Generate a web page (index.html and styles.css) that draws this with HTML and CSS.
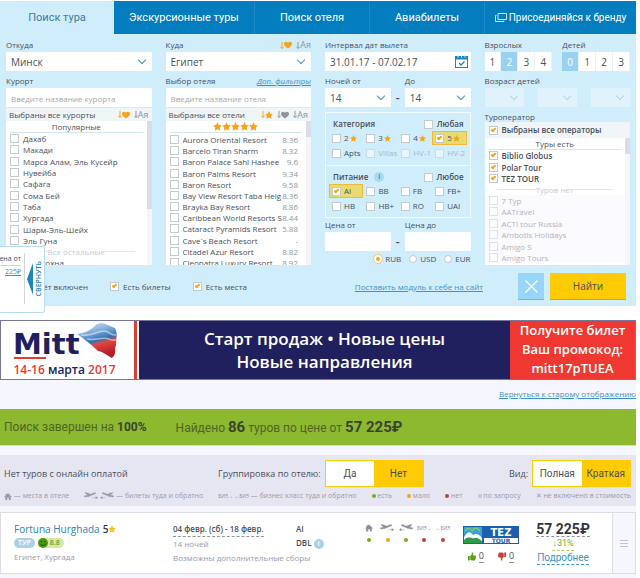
FILE: index.html
```
<!DOCTYPE html>
<html lang="ru">
<head>
    <meta charset="UTF-8">
    <meta name="viewport" content="width=device-width, initial-scale=1.0">
    <title>Поиск тура</title>
    <link rel="stylesheet" href="styles.css">
</head>
<body>
    <svg class="sprite" aria-hidden="true">
        <symbol id="i-arrow" viewBox="0 0 5 10"><path d="M2.5 0.500V8M0.500 6.500L2.500 9L4.500 6.500" fill="none" stroke="currentColor" stroke-width="1.200"/></symbol>
        <symbol id="i-heart" viewBox="0 0 10 9"><path d="M5 8.800C1 5.800 0 4.500 0 2.800C0 .3 3.500-.8 5 1.700C6.500-.8 10 .3 10 2.800C10 4.500 9 5.800 5 8.800Z" fill="currentColor"/></symbol>
        <symbol id="i-star" viewBox="0 0 10 10"><path d="M5 0L6.500 3.300L10 3.800L7.400 6.200L8.100 9.800L5 8L1.900 9.800L2.600 6.200L0 3.800L3.500 3.300Z" fill="currentColor"/></symbol>
        <symbol id="i-home" viewBox="0 0 10 9"><path d="M5 0L10 5H8.500V9H6V6H4V9H1.500V5H0L2 3V1H3.200V1.800Z" fill="currentColor"/></symbol>
        <symbol id="i-plane-to" viewBox="0 0 16 8"><path d="M1 0.500H3L7 2L11 .6C12 .3 13 .8 12.500 1.400L5 4.600L1 5L0 4L4 3.200ZM9 5.800H14M12.500 4.300L14.500 5.800L12.500 7.300" fill="currentColor" stroke="currentColor" stroke-width=".5"/></symbol>
        <symbol id="i-plane-back" viewBox="0 0 16 8"><path d="M15 0.500H13L9 2L5 .6C4 .3 3 .8 3.500 1.400L11 4.600L15 5L16 4L12 3.200ZM7 5.800H2M3.500 4.300L1.500 5.800L3.500 7.300" fill="currentColor" stroke="currentColor" stroke-width=".5"/></symbol>
        <symbol id="i-thumb" viewBox="0 0 9 9"><path d="M0 4H2V9H0ZM2.500 4L4.200 2.300V0H5.500L6 1.500L5.600 3.300H8.500L9 5L8.200 8.500L7.500 9H4L2.500 8Z" fill="currentColor"/></symbol>
    </svg>

    <nav class="tabs">
        <a href="#" class="tab active">Поиск тура</a>
        <a href="#" class="tab">Экскурсионные туры</a>
        <a href="#" class="tab">Поиск отеля</a>
        <a href="#" class="tab">Авиабилеты</a>
        <a href="#" class="tab tab-brand">
            <svg width="12" height="9" viewBox="0 0 12 9"><path d="M3 .5H11.500V6.500H3ZM1.500 2.500H.5V8.500H9V7.500" fill="none" stroke="currentColor" stroke-width=".8"/></svg>
            Присоединяйся к бренду
        </a>
    </nav>

    <form class="search">
        <div class="columns">
            <div class="column">
                <div class="label-row"><label for="from">Откуда</label></div>
                <div class="select"><select id="from"><option>Минск</option></select></div>
                <div class="label-row"><label for="resort">Курорт</label></div>
                <input type="text" id="resort" class="field" placeholder="Введите название курорта">
                <div class="list">
                    <div class="list-head">
                        <span>Выбраны все курорты</span>
                        <span class="sort">
                            <span class="orange"><svg width="4" height="9"><use href="#i-arrow"/></svg><svg width="8" height="8"><use href="#i-heart"/></svg></span>
                            <span class="gray"><svg width="4" height="9"><use href="#i-arrow"/></svg>Aя</span>
                        </span>
                    </div>
                    <div class="scroll">
                        <div class="scroll-body">
                            <div class="group-title">Популярные</div>
                            <ul class="items resorts">
                                <li><label><input type="checkbox">Дахаб</label></li>
                                <li><label><input type="checkbox">Макади</label></li>
                                <li><label><input type="checkbox">Марса Алам, Эль Кусейр</label></li>
                                <li><label><input type="checkbox">Нувейба</label></li>
                                <li><label><input type="checkbox">Сафага</label></li>
                                <li><label><input type="checkbox">Сома Бей</label></li>
                                <li><label><input type="checkbox">Таба</label></li>
                                <li><label><input type="checkbox">Хургада</label></li>
                                <li><label><input type="checkbox">Шарм-Эль-Шейх</label></li>
                                <li><label><input type="checkbox">Эль Гуна</label></li>
                            </ul>
                            <div class="separator">Все остальные</div>
                            <ul class="items"><li><label><input type="checkbox">Айн Сохна</label></li></ul>
                        </div>
                        <div class="track"><div class="thumb thumb-long"></div></div>
                    </div>
                </div>
            </div>

            <div class="column">
                <div class="label-row">
                    <label for="to">Куда</label>
                    <span class="sort">
                        <span class="orange"><svg width="4" height="9"><use href="#i-arrow"/></svg><svg width="8" height="8"><use href="#i-heart"/></svg></span>
                        <span class="gray"><svg width="4" height="9"><use href="#i-arrow"/></svg>Aя</span>
                    </span>
                </div>
                <div class="select"><select id="to"><option>Египет</option></select></div>
                <div class="label-row"><label for="hotel">Выбор отеля</label><a href="#" class="filters">Доп. фильтры</a></div>
                <input type="text" id="hotel" class="field" placeholder="Введите название отеля">
                <div class="list">
                    <div class="list-head">
                        <span>Выбраны все отели</span>
                        <span class="sort">
                            <span class="orange"><svg width="4" height="9"><use href="#i-arrow"/></svg><svg width="8" height="8"><use href="#i-star"/></svg></span>
                            <span class="gray"><svg width="4" height="9"><use href="#i-arrow"/></svg><svg width="8" height="8"><use href="#i-heart"/></svg></span>
                            <span class="gray"><svg width="4" height="9"><use href="#i-arrow"/></svg>Aя</span>
                        </span>
                    </div>
                    <div class="scroll">
                        <div class="scroll-body">
                            <div class="group-title orange">
                                <svg width="9" height="9"><use href="#i-star"/></svg><svg width="9" height="9"><use href="#i-star"/></svg><svg width="9" height="9"><use href="#i-star"/></svg><svg width="9" height="9"><use href="#i-star"/></svg><svg width="9" height="9"><use href="#i-star"/></svg>
                            </div>
                            <ul class="items hotels">
                                <li><label><input type="checkbox"><span>Aurora Oriental Resort</span></label><b>8.36</b></li>
                                <li><label><input type="checkbox"><span>Barcelo Tiran Sharm</span></label><b>8.32</b></li>
                                <li><label><input type="checkbox"><span>Baron Palace Sahl Hashee</span></label><b>9.6</b></li>
                                <li><label><input type="checkbox"><span>Baron Palms Resort</span></label><b>9.34</b></li>
                                <li><label><input type="checkbox"><span>Baron Resort</span></label><b>9.58</b></li>
                                <li><label><input type="checkbox"><span>Bay View Resort Taba Heig</span></label><b>8.36</b></li>
                                <li><label><input type="checkbox"><span>Brayka Bay Resort</span></label><b>8.86</b></li>
                                <li><label><input type="checkbox"><span>Caribbean World Resorts S</span></label><b>8.44</b></li>
                                <li><label><input type="checkbox"><span>Cataract Pyramids Resort</span></label><b>5.88</b></li>
                                <li><label><input type="checkbox"><span>Cave`s Beach Resort</span></label><b>-</b></li>
                                <li><label><input type="checkbox"><span>Citadel Azur Resort</span></label><b>8.82</b></li>
                                <li><label><input type="checkbox"><span>Cleopatra Luxury Resort</span></label><b>8.92</b></li>
                            </ul>
                        </div>
                        <div class="track"><div class="thumb"></div></div>
                    </div>
                </div>
            </div>

            <div class="column">
                <div class="label-row"><label for="dates">Интервал дат вылета</label></div>
                <div class="date">
                    <input type="text" id="dates" class="field" value="31.01.17 - 07.02.17">
                    <svg width="13" height="13" viewBox="0 0 13 13"><rect x=".5" y="1.500" width="12" height="11" fill="#fff" stroke="#1b86be"/><path d="M0 1H13V4.500H0Z" fill="#1b86be"/><path d="M3 0V2.500M6.500 0V2.500M10 0V2.500" stroke="#d0edfc"/><path d="M4 8L6 10L9.500 6.500" fill="none" stroke="#1b86be" stroke-width="1.300"/></svg>
                </div>
                <div class="range">
                    <div>
                        <div class="label-row"><label for="nights-from">Ночей от</label></div>
                        <div class="select"><select id="nights-from"><option>14</option></select></div>
                    </div>
                    <span class="dash">-</span>
                    <div>
                        <div class="label-row"><label for="nights-to">До</label></div>
                        <div class="select"><select id="nights-to"><option>14</option></select></div>
                    </div>
                </div>
                <div class="options">
                    <div class="options-group">
                        <div class="options-head"><span>Категория</span><label><input type="checkbox">Любая</label></div>
                        <div class="options-grid">
                            <label><input type="checkbox">2<svg width="7" height="7"><use href="#i-star"/></svg></label>
                            <label><input type="checkbox">3<svg width="7" height="7"><use href="#i-star"/></svg></label>
                            <label><input type="checkbox">4<svg width="7" height="7"><use href="#i-star"/></svg></label>
                            <label class="picked"><input type="checkbox" checked>5<svg width="7" height="7"><use href="#i-star"/></svg></label>
                            <label><input type="checkbox">Apts</label>
                            <label class="off"><input type="checkbox" disabled>Villas</label>
                            <label class="off"><input type="checkbox" disabled>HV-1</label>
                            <label class="off"><input type="checkbox" disabled>HV-2</label>
                        </div>
                    </div>
                    <div class="options-group">
                        <div class="options-head"><span>Питание</span><i class="info">i</i><label><input type="checkbox">Любое</label></div>
                        <div class="options-grid">
                            <label class="picked"><input type="checkbox" checked>AI</label>
                            <label><input type="checkbox">BB</label>
                            <label><input type="checkbox">FB</label>
                            <label><input type="checkbox">FB+</label>
                            <label><input type="checkbox">HB</label>
                            <label><input type="checkbox">HB+</label>
                            <label><input type="checkbox">RO</label>
                            <label><input type="checkbox">UAI</label>
                        </div>
                    </div>
                </div>
                <div class="range">
                    <div>
                        <div class="label-row"><label for="price-from">Цена от</label></div>
                        <input type="text" id="price-from" class="field">
                    </div>
                    <span class="dash">-</span>
                    <div>
                        <div class="label-row"><label for="price-to">Цена до</label></div>
                        <input type="text" id="price-to" class="field">
                    </div>
                </div>
                <div class="currency">
                    <label><input type="radio" name="currency" checked>RUB</label>
                    <label><input type="radio" name="currency">USD</label>
                    <label><input type="radio" name="currency">EUR</label>
                </div>
            </div>

            <div class="column">
                <div class="people">
                    <div>
                        <div class="label-row"><span>Взрослых</span></div>
                        <div class="numbers">
                            <button type="button">1</button><button type="button" class="on">2</button><button type="button">3</button><button type="button">4</button>
                        </div>
                    </div>
                    <div>
                        <div class="label-row"><span>Детей</span></div>
                        <div class="numbers">
                            <button type="button" class="on">0</button><button type="button">1</button><button type="button">2</button><button type="button">3</button>
                        </div>
                    </div>
                </div>
                <div class="label-row"><span>Возраст детей</span></div>
                <div class="ages">
                    <div class="select"><select disabled aria-label="Возраст 1"></select></div>
                    <div class="select"><select disabled aria-label="Возраст 2"></select></div>
                    <div class="select"><select disabled aria-label="Возраст 3"></select></div>
                </div>
                <div class="label-row"><span>Туроператор</span></div>
                <div class="list operators">
                    <div class="list-head"><label><input type="checkbox" checked>Выбраны все операторы</label></div>
                    <div class="scroll">
                        <div class="scroll-body">
                            <div class="group-title">Туры есть</div>
                            <ul class="items strong">
                                <li><label><input type="checkbox" checked>Biblio Globus</label></li>
                                <li><label><input type="checkbox" checked>Polar Tour</label></li>
                                <li><label><input type="checkbox" checked>TEZ TOUR</label></li>
                            </ul>
                            <div class="separator">Туров нет</div>
                            <ul class="items empty">
                                <li><label><input type="checkbox">7 Тур</label></li>
                                <li><label><input type="checkbox">AATravel</label></li>
                                <li><label><input type="checkbox">ACTI tour Russia</label></li>
                                <li><label><input type="checkbox">Ambotis Holidays</label></li>
                                <li><label><input type="checkbox">Amigo S</label></li>
                                <li><label><input type="checkbox">Amigo Tours</label></li>
                            </ul>
                        </div>
                        <div class="track"><div class="thumb"></div></div>
                    </div>
                </div>
            </div>
        </div>

        <div class="actions">
            <label><input type="checkbox" checked>Перелёт включен</label>
            <label><input type="checkbox" checked>Есть билеты</label>
            <label><input type="checkbox" checked>Есть места</label>
            <a href="#">Поставить модуль к себе на сайт</a>
            <button type="reset" class="clear" aria-label="Очистить"><svg width="13" height="13" viewBox="0 0 13 13"><path d="M.5 .5L12.500 12.500M12.500 .5L.5 12.500" stroke="#fff" stroke-width="1.300"/></svg></button>
            <button type="submit" class="find">Найти</button>
        </div>
    </form>

    <aside class="collapsed">
        <div class="collapsed-price"><span>ена от</span><a href="#">225₽</a></div>
        <button type="button"><svg width="6" height="32" viewBox="0 0 6 32"><path d="M6 0V32L0 16Z" fill="#1b86be"/></svg><span>СВЕРНУТЬ</span></button>
    </aside>

    <a href="#" class="banner">
        <span class="mitt">
            <svg width="122" height="42" viewBox="0 0 122 42">
                <defs>
                    <linearGradient id="flag" x1="0" y1="0" x2="0.300" y2="1">
                        <stop offset="0" stop-color="#dfe9f5"/><stop offset=".3" stop-color="#8fb6dd"/><stop offset=".6" stop-color="#2f6fb5"/><stop offset=".68" stop-color="#e04a45"/><stop offset="1" stop-color="#b51f2a"/>
                    </linearGradient>
                </defs>
                <path d="M76 13C84 12 90 9 96 3C102 0 106 4 114 7C117 12 115 18 115 24C113 29 116 33 111 37C107 35 103 31 97 30C93 26 86 20 76 13Z" fill="url(#flag)"/>
                <path d="M80 14C90 16 96 10 103 10C108 10 111 15 115 14M86 18C96 20 102 15 108 18C111 20 113 19 115 19" fill="none" stroke="#fff" stroke-opacity=".5" stroke-width="1.500"/>
                <text x="12" y="33" class="mitt-name">Mitt</text>
                <rect x="13" y="36" width="32" height="2" fill="#e8392f"/>
            </svg>
            <span class="mitt-date">14-16 <b>марта</b> 2017</span>
        </span>
        <span class="banner-text">Старт продаж • Новые цены<br>Новые направления</span>
        <span class="promo">Получите билет<br>Ваш промокод:<br>mitt17pTUEA</span>
    </a>

    <main class="results">
        <div class="old-view"><a href="#">Вернуться к старому отображению</a></div>
        <div class="status">
            <span>Поиск завершен на <b>100%</b></span>
            <span>Найдено <b class="big">86</b> туров по цене от <b class="big">57 225₽</b></span>
        </div>
        <div class="toolbar">
            <div class="toolbar-row">
                <span class="no-tours">Нет туров с онлайн оплатой</span>
                <span>Группировка по отелю:</span>
                <div class="toggle"><button type="button">Да</button><button type="button" class="on">Нет</button></div>
                <span class="view">Вид:</span>
                <div class="toggle"><button type="button">Полная</button><button type="button" class="on">Краткая</button></div>
            </div>
            <div class="legend">
                <span><svg width="8" height="7"><use href="#i-home"/></svg> — места в отеле</span>
                <span><svg width="15" height="8"><use href="#i-plane-to"/></svg><svg width="15" height="8"><use href="#i-plane-back"/></svg> — билеты туда и обратно</span>
                <span><small>БИЗ→ ←БИЗ</small> — бизнес класс туда и обратно</span>
                <span><i class="dot green"></i> есть</span>
                <span><i class="dot amber"></i> мало</span>
                <span><i class="dot red"></i> нет</span>
                <span><i class="dot"></i> по запросу</span>
                <span>✕ не включено в стоимость</span>
            </div>
        </div>

        <article class="tour">
            <div class="tour-hotel">
                <h2><a href="#">Fortuna Hurghada</a> 5<svg width="8" height="8"><use href="#i-star"/></svg></h2>
                <div class="badges">
                    <span class="type">ТУР</span>
                    <span class="score"><svg width="10" height="10" viewBox="0 0 10 10"><circle cx="5" cy="5" r="5" fill="#4c9a0b"/><circle cx="3.300" cy="3.500" r=".8" fill="#1d4a00"/><circle cx="6.700" cy="3.500" r=".8" fill="#1d4a00"/><path d="M2 5.500Q5 9.500 8 5.500" fill="none" stroke="#1d4a00"/></svg>8.8</span>
                </div>
                <div class="place">Египет, Хургада</div>
            </div>
            <div class="tour-dates">
                <strong>04 февр. (сб) - 18 февр.</strong>
                <span>14 ночей</span>
                <span>Возможны дополнительные сборы</span>
            </div>
            <div class="tour-room"><span>AI</span><span>DBL <i class="info">i</i></span></div>
            <div class="tour-seats">
                <span><svg width="8" height="8"><use href="#i-home"/></svg><i class="dot green"></i></span>
                <span><svg width="15" height="8"><use href="#i-plane-to"/></svg><i class="dot amber"></i></span>
                <span><svg width="15" height="8"><use href="#i-plane-back"/></svg><i class="dot green"></i></span>
                <span><small>БИЗ→</small><i class="dot red"></i></span>
                <span><small>←БИЗ</small><i class="dot red"></i></span>
            </div>
            <div class="tour-operator">
                <svg width="56" height="18" viewBox="0 0 56 18">
                    <rect width="56" height="18" fill="#1d5fae"/>
                    <rect x="1" y="1" width="18" height="16" fill="#3aa0dc"/>
                    <path d="M1 11C5 5 7 5 10 9C13 7 16 8 19 12V17H1Z" fill="#fff"/>
                    <path d="M1 14C6 9 8 13 12 12C15 11 17 14 19 15V17H1Z" fill="#2f9a4a"/>
                    <path d="M2 5C5 1 8 2 9 5M9 5C11 1 15 2 17 5" fill="none" stroke="#7fd05c" stroke-width="1.500"/>
                    <text x="38" y="10" class="tez-name">TEZ</text>
                    <rect x="21" y="12" width="34" height="5" fill="#fff"/>
                    <text x="38" y="17" class="tez-tour">TOUR</text>
                </svg>
                <div class="votes">
                    <span class="up"><svg width="8" height="9"><use href="#i-thumb"/></svg><a href="#">0</a></span>
                    <span class="down"><svg width="8" height="9"><use href="#i-thumb"/></svg><a href="#">0</a></span>
                </div>
            </div>
            <div class="tour-price">
                <strong>57 225₽</strong>
                <span class="drop">↓31%</span>
                <a href="#">Подробнее</a>
            </div>
            <button type="button" class="menu" aria-label="Меню"><svg width="8" height="7" viewBox="0 0 8 7"><path d="M0 .5H8M0 3.500H8M0 6.500H8" stroke="#c4c4cf"/></svg></button>
        </article>
    </main>
</body>
</html>
```
FILE: styles.css
```
* {
    box-sizing: border-box;
}
body {
    margin: 0;
    padding: 1px 4px 0 0;
    background-color: #fff;
    color: #4a4f5a;
    font-family: "Open Sans", sans-serif;
    font-size: 9px;
    line-height: 12px;
}
a {
    color: #3e93c2;
}
button, input, select {
    font-family: inherit;
    font-size: inherit;
    color: inherit;
    margin: 0;
    padding: 0;
    border: 0;
    border-radius: 0;
}
ul {
    list-style: none;
    margin: 0;
    padding: 0;
}
svg {
    flex: none;
}
.sprite {
    display: none;
}
.orange {
    color: #f7a31a;
}
.gray {
    color: #8f959b;
}

/* tabs */
.tabs {
    display: grid;
    grid-template-columns: 114fr 140fr 115fr 115fr 152fr;
    background-color: #047dbe;
    font-family: Roboto, sans-serif;
}
.tab {
    display: flex;
    align-items: center;
    justify-content: center;
    height: 33px;
    font-size: 11px;
    color: #fff;
    text-decoration: none;
}
.tab + .tab + .tab {
    border-left: 1px solid #2089c5;
}
.tab.active {
    background-color: #d0edfc;
    color: #3d7c9f;
}
.tab-brand {
    font-size: 10px;
    gap: 2px;
}

/* search form */
.search {
    padding: 4px 6px 6px;
    background-color: #d0edfc;
}
.columns {
    display: grid;
    grid-template-columns: repeat(4, minmax(0, 1fr));
    gap: 14px;
    height: 227px;
}
.column {
    display: flex;
    flex-direction: column;
    min-height: 0;
}
.label-row {
    display: flex;
    flex: none;
    justify-content: space-between;
    align-items: center;
    height: 14px;
    font-size: 8px;
}
.filters {
    font-style: italic;
}
.field, .select select {
    display: block;
    width: 100%;
    height: 19px;
    padding: 0 5px;
    background-color: #fff;
    appearance: none;
    outline: 0;
}
.field::placeholder {
    color: #a9a9a9;
    font-size: 8px;
}
.field, .select {
    flex: none;
    font-size: 10px;
    margin-bottom: 3px;
}
.select {
    position: relative;
}
.select::after {
    content: "";
    position: absolute;
    right: 7px;
    top: 5px;
    width: 5px;
    height: 5px;
    border: solid #3e93c2;
    border-width: 0 1px 1px 0;
    transform: rotate(45deg);
}
.date {
    position: relative;
}
.date svg {
    position: absolute;
    right: 3px;
    top: 3px;
}
.sort {
    display: flex;
    gap: 4px;
    font-size: 9px;
}
.sort span {
    display: flex;
    align-items: center;
}

input[type="checkbox"] {
    appearance: none;
    flex: none;
    position: relative;
    width: 9px;
    height: 9px;
    border: 1px solid #c3cad0;
    background-color: #fff;
}
input[type="checkbox"]:checked::after {
    content: "";
    position: absolute;
    left: 2px;
    top: 0;
    width: 1px;
    height: 3px;
    border: solid #f7a31a;
    border-width: 0 2px 2px 0;
    transform: rotate(45deg);
}

.list {
    display: flex;
    flex-direction: column;
    flex: 1;
    min-height: 0;
    margin-top: -2px;
    overflow: hidden;
    background-color: #fff;
    font-size: 8px;
}
.list-head {
    display: flex;
    justify-content: space-between;
    align-items: center;
    flex: none;
    height: 13px;
    padding: 0 3px;
    background-color: #f0f5f8;
}
.list-head label {
    display: flex;
    align-items: center;
    gap: 4px;
    font-weight: 600;
}
.scroll {
    display: flex;
    flex: 1;
    min-height: 0;
}
.scroll-body {
    flex: 1;
    min-width: 0;
    overflow: hidden;
}
.track {
    width: 5px;
    background-color: #f6f6fa;
}
.thumb {
    height: 16px;
    background-color: #dcdbe8;
}
.thumb-long {
    height: 88px;
}
.group-title {
    display: flex;
    align-items: center;
    justify-content: center;
    height: 12px;
    margin: 0 4px;
    border-bottom: 1px solid #d3e6f0;
}
.items {
    display: flex;
    flex-direction: column;
    justify-content: space-between;
}
.items li {
    display: flex;
    justify-content: space-between;
    flex: none;
    height: 11px;
    line-height: 11px;
    padding: 0 8px 0 4px;
}
.items label {
    display: flex;
    align-items: center;
    gap: 4px;
    min-width: 0;
    white-space: nowrap;
}
.items b {
    font-weight: 400;
    color: #8f959b;
}
.items label span {
    overflow: hidden;
}
.resorts {
    height: 113px;
}
.hotels {
    height: 134px;
    margin-top: 1px;
}
.separator {
    display: flex;
    align-items: center;
    justify-content: center;
    height: 11px;
    padding: 0 12px;
    color: #c9c9d4;
}
.separator::before, .separator::after {
    content: "";
    flex: 1;
    height: 1px;
    background-color: #e4e4ee;
}

.range {
    display: grid;
    grid-template-columns: 1fr 14px 1fr;
}
.dash {
    align-self: end;
    height: 24px;
    line-height: 24px;
    text-align: center;
    font-size: 12px;
    font-weight: 600;
}
.options {
    margin-top: 2px;
    border: 1px solid #eefaff;
}
.options-group {
    height: 52px;
    padding: 4px 3px 0;
}
.options-group + .options-group {
    border-top: 1px solid #eefaff;
}
.options-head {
    display: flex;
    align-items: center;
    gap: 6px;
    height: 14px;
    padding: 0 3px 0 4px;
    font-size: 8px;
    font-weight: 600;
}
.options-head label {
    display: flex;
    align-items: center;
    gap: 4px;
    margin-left: auto;
}
.options-grid {
    display: grid;
    grid-template-columns: repeat(4, 1fr);
    grid-auto-rows: 15px;
    font-size: 8px;
}
.options-grid label {
    display: flex;
    align-items: center;
    gap: 3px;
    height: 14px;
    padding-left: 2px;
    border: 1px solid transparent;
}
.options-grid svg {
    margin-left: -2px;
    color: #f7a31a;
}
.options-grid .picked {
    background-color: #e9da72;
    border-color: #f0b93a;
}
.off {
    color: #a9b9c4;
}
.off input {
    opacity: 0.5;
}
.info {
    display: inline-flex;
    align-items: center;
    justify-content: center;
    width: 10px;
    height: 10px;
    border-radius: 50%;
    background-color: #a5daf3;
    color: #1b86be;
    font-size: 7px;
    font-style: normal;
    font-weight: 600;
}
.currency {
    display: flex;
    justify-content: flex-end;
    gap: 8px;
    height: 10px;
    font-size: 8px;
}
.currency label {
    display: flex;
    align-items: center;
    gap: 3px;
}
.currency input {
    appearance: none;
    width: 8px;
    height: 8px;
    border: 1px solid #c3cad0;
    border-radius: 50%;
    background-color: #fff;
}
.currency input:checked {
    border: 2px solid #fff;
    background-color: #f7a31a;
    outline: 1px solid #f3c778;
}

.people {
    display: grid;
    grid-template-columns: 1fr 1fr;
    gap: 10px;
}
.numbers {
    display: grid;
    grid-template-columns: repeat(4, 1fr);
    height: 19px;
    margin-bottom: 3px;
}
.numbers button {
    background-color: #fff;
    border-right: 1px solid #e6f3fa;
    font-size: 10px;
}
.numbers .on {
    background-color: #97d2f0;
    color: #fff;
}
.ages {
    display: grid;
    grid-template-columns: repeat(3, 1fr);
    gap: 14px;
}
.ages .select {
    opacity: 0.5;
}
.ages .select::after {
    border-color: #a9b9c4;
}
.operators .list-head {
    height: 16px;
    padding-left: 4px;
}
.operators .items {
    height: 34px;
}
.operators .empty {
    height: 68px;
    background-color: #fafaff;
    color: #b4b4bd;
}
.strong {
    font-weight: 600;
}
.empty input {
    opacity: 0.5;
}

.actions {
    display: flex;
    align-items: center;
    height: 27px;
    margin-top: 8px;
    padding-right: 4px;
    font-size: 8px;
}
.actions label {
    display: flex;
    align-items: center;
    gap: 4px;
    margin-right: 22px;
}
.actions a {
    margin-left: auto;
    margin-right: 35px;
}
.clear, .find {
    height: 27px;
    border-bottom: 1px solid #6fb6da;
    background-color: #97d6f8;
}
.clear {
    width: 26px;
    padding-top: 2px;
}
.find {
    width: 76px;
    margin-left: 6px;
    border-color: #d9a800;
    background-color: #ffcb05;
    font-size: 10px;
}

/* collapsed side panel */
.collapsed {
    position: absolute;
    left: 0;
    top: 246px;
    display: flex;
    width: 45px;
    height: 67px;
    padding: 6px 2px 8px 0;
    background-color: #fff;
    border: 1px solid #b5dbee;
    border-left: 0;
    border-radius: 0 3px 3px 0;
    font-size: 7px;
}
.collapsed-price {
    display: flex;
    flex-direction: column;
    align-items: flex-end;
    flex: none;
    width: 25px;
    padding-right: 3px;
    border-right: 1px solid #d4d4de;
    white-space: nowrap;
}
.collapsed-price span {
    border-bottom: 1px solid #d4d4de;
}
.collapsed button {
    display: flex;
    align-items: center;
    gap: 2px;
    padding-left: 2px;
    background: none;
    color: #1b86be;
    font-size: 7px;
    font-weight: 600;
    line-height: 8px;
}
.collapsed button span {
    writing-mode: vertical-rl;
    rotate: 180deg;
}

/* banner */
.banner {
    display: grid;
    grid-template-columns: 138px 1fr 125px;
    height: 60px;
    margin-top: 14px;
    border: 1px solid #77779b;
    text-decoration: none;
    color: #fff;
    text-align: center;
    font-weight: 600;
}
.mitt {
    display: flex;
    flex-direction: column;
    border-right: 3px solid #e8392f;
    margin-right: 2px;
}
.mitt-name {
    font: bold 29px "DejaVu Sans", sans-serif;
    fill: #20205e;
}
.mitt-date {
    padding-right: 6px;
    color: #e8392f;
    font-size: 12px;
    line-height: 14px;
}
.mitt-date b {
    color: #20205e;
    font-weight: 600;
}
.banner-text {
    padding-top: 6px;
    background-color: #20205e;
    font-size: 17px;
    line-height: 23px;
}
.promo {
    background-color: #ee3831;
    font-size: 13px;
    line-height: 19px;
}

/* results */
.results {
    padding-bottom: 4px;
    background-color: #f5f6fe;
}
.old-view {
    height: 29px;
    line-height: 28px;
    text-align: right;
    font-size: 8px;
}
.status {
    display: flex;
    align-items: center;
    gap: 29px;
    height: 37px;
    padding-left: 4px;
    border-bottom: 1px solid #cfe59d;
    background-color: #8cb92f;
    color: #4e6526;
    font-family: Roboto, sans-serif;
    font-size: 12px;
    line-height: 20px;
}
.status b {
    color: #3b4430;
}
.status .big {
    font-size: 15px;
}
.toolbar {
    margin-top: 9px;
    padding: 5px 5px 4px 4px;
    background-color: #e6e6f2;
}
.toolbar-row {
    display: flex;
    align-items: center;
    height: 27px;
    gap: 4px;
}
.no-tours {
    width: 210px;
}
.view {
    margin-left: auto;
}
.toggle {
    display: grid;
    grid-template-columns: 1fr 1fr;
    width: 99px;
    height: 27px;
    border: 1px solid #ffcb05;
    font-family: Roboto, sans-serif;
    font-size: 10px;
}
.toggle button {
    background-color: #fff;
}
.toggle .on {
    background-color: #ffcb05;
}
.legend {
    display: flex;
    justify-content: space-between;
    margin-top: 3px;
    color: #9a9aa6;
    font-size: 7px;
    white-space: nowrap;
}
.legend svg {
    vertical-align: middle;
}
small {
    font-size: 5px;
    color: #8c8c98;
}
.dot {
    display: inline-block;
    width: 4px;
    height: 4px;
    border-radius: 50%;
    background-color: #c4c4cf;
}
.dot.green {
    background-color: #7aab1e;
}
.dot.amber {
    background-color: #f7a31a;
}
.dot.red {
    background-color: #c8402f;
}

/* tour card */
.tour {
    display: grid;
    grid-template-columns: minmax(0, 159fr) minmax(0, 123fr) minmax(0, 64fr) minmax(0, 92fr) minmax(0, 78fr) minmax(0, 82fr) 23px;
    height: 62px;
    margin-top: 6px;
    padding-left: 13px;
    border: 1px solid #dddde9;
    background-color: #fff;
    color: #9a9aa6;
    white-space: nowrap;
}
.tour > div {
    padding-top: 9px;
}
.tour h2 {
    display: flex;
    align-items: center;
    gap: 3px;
    margin: 0;
    height: 14px;
    font-size: 10px;
    font-weight: 600;
    color: #33363e;
}
.tour h2 svg {
    margin-left: -3px;
    color: #fbc02d;
}
.tour h2 a {
    text-decoration: none;
    font-weight: 500;
    color: #2a83b4;
}
.badges {
    display: flex;
    gap: 3px;
    height: 14px;
    align-items: center;
    font-size: 7px;
    font-weight: 600;
    line-height: 10px;
}
.type {
    padding: 0 4px;
    border-radius: 5px;
    background-color: #a9d1e6;
    color: #fff;
}
.score {
    display: flex;
    gap: 2px;
    padding-right: 4px;
    border-radius: 5px;
    background-color: #d3eba3;
    color: #6f9a2a;
}
.place, .tour-dates span {
    font-size: 8px;
    line-height: 14px;
}
.tour-dates, .tour-room {
    display: flex;
    flex-direction: column;
    align-items: flex-start;
    line-height: 14px;
}
.tour-dates strong {
    border-bottom: 1px dashed #8f959b;
    color: #4a4f5a;
    font-size: 8px;
    font-weight: 600;
}
.tour-room {
    color: #4a4f5a;
    font-size: 8px;
    font-weight: 600;
}
.tour-room .info {
    background-color: #a9d1e6;
    color: #fff;
}
.tour-seats {
    display: grid;
    grid-template-columns: repeat(5, 1fr);
    color: #8c8c98;
}
.tour > .tour-seats {
    padding-top: 11px;
}
.tour-seats span {
    display: flex;
    flex-direction: column;
    align-items: center;
    gap: 6px;
}
.tour-seats small {
    height: 8px;
    line-height: 8px;
}
.tour-operator {
    display: flex;
    flex-direction: column;
    align-items: center;
    gap: 6px;
}
.tour > .tour-operator {
    padding-top: 13px;
}
.tez-name {
    font: bold 10px "DejaVu Sans", sans-serif;
    fill: #fff;
    text-anchor: middle;
}
.tez-tour {
    font: bold 6px "DejaVu Sans", sans-serif;
    fill: #1d5fae;
    text-anchor: middle;
}
.votes {
    display: flex;
    gap: 14px;
}
.votes span {
    display: flex;
    align-items: center;
    gap: 3px;
}
.votes a {
    color: #4a4f5a;
    text-decoration: none;
    border-bottom: 1px dashed #8f959b;
}
.up svg {
    color: #57a314;
}
.down svg {
    color: #c8402f;
    rotate: 180deg;
}
.tour-price {
    display: flex;
    flex-direction: column;
    align-items: center;
    padding-right: 16px;
    font-family: Roboto, sans-serif;
}
.tour-price strong {
    border-bottom: 1px dashed #8f959b;
    color: #33363e;
    font-size: 14px;
    line-height: 14px;
}
.drop {
    border-bottom: 1px dashed #a8cf6b;
    color: #7aab1e;
    line-height: 13px;
}
.tour-price a {
    margin-top: 1px;
    border-bottom: 1px dashed #3e93c2;
    font-size: 10px;
    line-height: 12px;
    text-decoration: none;
}
.menu {
    border-left: 1px solid #dddde9;
    background-color: #f5f6fe;
}
```
